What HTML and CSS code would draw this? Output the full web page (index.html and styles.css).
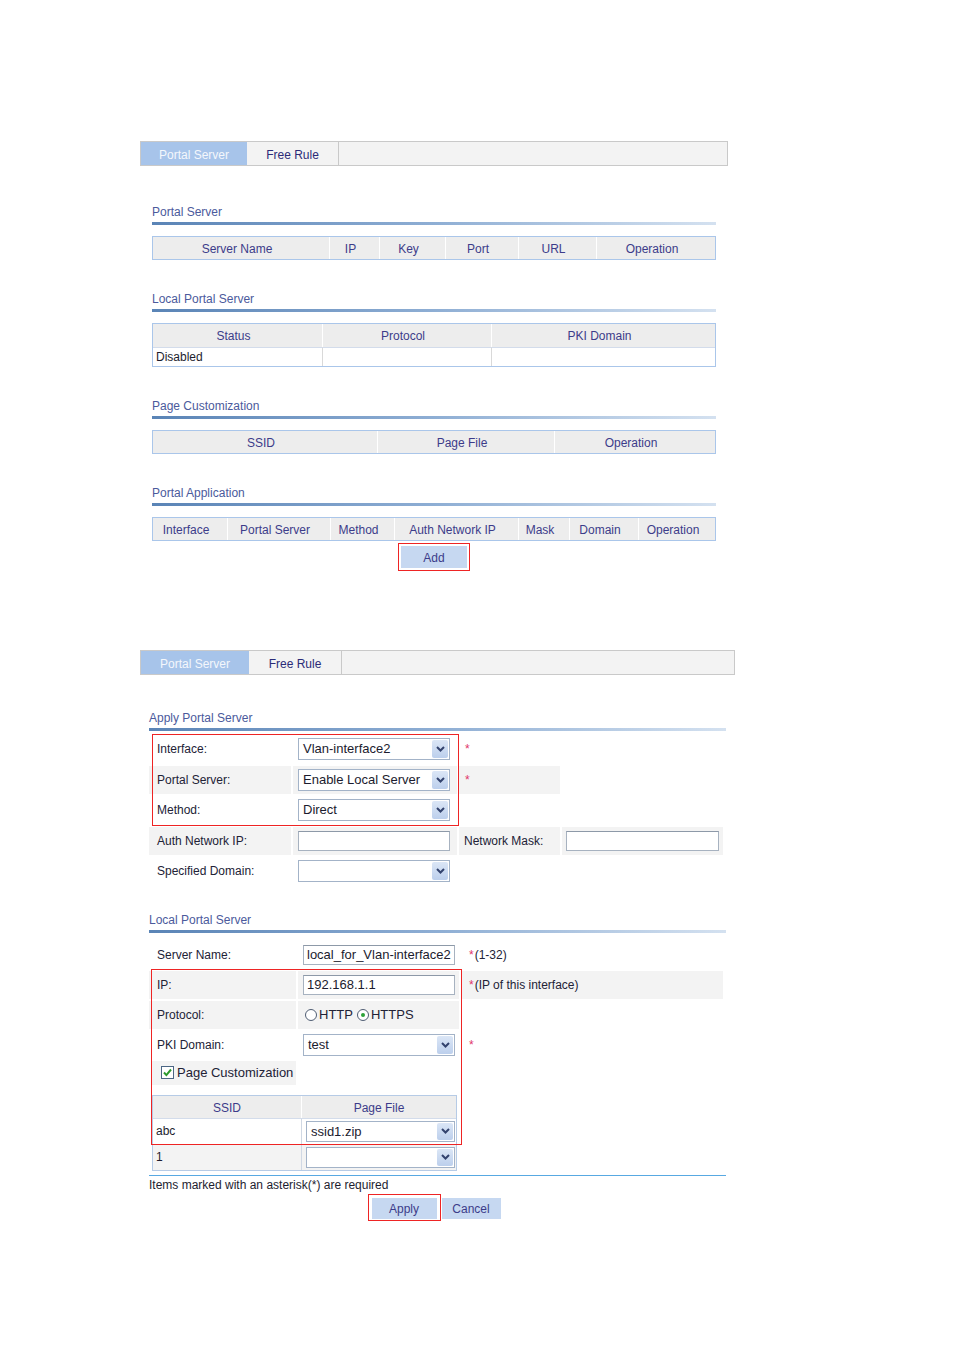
FILE: index.html
```html
<!DOCTYPE html>
<html lang="en">

<head>
    <meta charset="UTF-8">
    <meta name="viewport" content="width=device-width, initial-scale=1.0">
    <title>Portal Server</title>
    <link rel="stylesheet" href="styles.css">
</head>

<body>
    <!-- Portal server list -->
    <div class="panel panel-list">
        <div class="tabs">
            <div class="tab active">Portal Server</div>
            <div class="tab">Free Rule</div>
        </div>
        <div class="content">
            <div class="section first">
                <div class="sec-title">Portal Server</div>
                <div class="sec-bar"></div>
                <table class="list t-server">
                    <tr><th>Server Name</th><th>IP</th><th>Key</th><th>Port</th><th>URL</th><th>Operation</th></tr>
                </table>
            </div>
            <div class="section">
                <div class="sec-title">Local Portal Server</div>
                <div class="sec-bar"></div>
                <table class="list t-local">
                    <tr><th>Status</th><th>Protocol</th><th>PKI Domain</th></tr>
                    <tr><td>Disabled</td><td></td><td></td></tr>
                </table>
            </div>
            <div class="section">
                <div class="sec-title">Page Customization</div>
                <div class="sec-bar"></div>
                <table class="list t-page">
                    <tr><th>SSID</th><th>Page File</th><th>Operation</th></tr>
                </table>
            </div>
            <div class="section">
                <div class="sec-title">Portal Application</div>
                <div class="sec-bar"></div>
                <table class="list t-app">
                    <tr><th>Interface</th><th>Portal Server</th><th>Method</th><th>Auth Network IP</th><th>Mask</th><th>Domain</th><th>Operation</th></tr>
                </table>
                <div class="add-wrap">
                    <span class="mark"><button class="btn btn-add">Add</button></span>
                </div>
            </div>
        </div>
    </div>

    <!-- Apply portal server form -->
    <div class="panel panel-apply">
        <div class="tabs">
            <div class="tab active">Portal Server</div>
            <div class="tab">Free Rule</div>
        </div>
        <div class="content">
            <div class="section first">
                <div class="sec-title">Apply Portal Server</div>
                <div class="sec-bar"></div>
                <div class="form form-apply">
                    <div class="row">
                        <div class="cell c1">Interface:</div>
                        <div class="cell c2">
                            <div class="select"><span class="val">Vlan-interface2</span><span class="arrow"><svg width="9" height="6" viewBox="0 0 9 6"><path d="M1 1l3.5 3.5L8 1" fill="none" stroke="#33436e" stroke-width="2"/></svg></span></div>
                        </div>
                        <div class="cell c3"><span class="req">*</span></div>
                    </div>
                    <div class="row gray">
                        <div class="cell c1">Portal Server:</div>
                        <div class="cell c2">
                            <div class="select"><span class="val">Enable Local Server</span><span class="arrow"><svg width="9" height="6" viewBox="0 0 9 6"><path d="M1 1l3.5 3.5L8 1" fill="none" stroke="#33436e" stroke-width="2"/></svg></span></div>
                        </div>
                        <div class="cell c3"><span class="req">*</span></div>
                    </div>
                    <div class="row">
                        <div class="cell c1">Method:</div>
                        <div class="cell c2">
                            <div class="select"><span class="val">Direct</span><span class="arrow"><svg width="9" height="6" viewBox="0 0 9 6"><path d="M1 1l3.5 3.5L8 1" fill="none" stroke="#33436e" stroke-width="2"/></svg></span></div>
                        </div>
                    </div>
                    <div class="row gray">
                        <div class="cell c1">Auth Network IP:</div>
                        <div class="cell c2"><div class="input"></div></div>
                        <div class="cell c3 c3-label">Network Mask:</div>
                        <div class="cell c4"><div class="input"></div></div>
                    </div>
                    <div class="row">
                        <div class="cell c1">Specified Domain:</div>
                        <div class="cell c2">
                            <div class="select"><span class="val"></span><span class="arrow"><svg width="9" height="6" viewBox="0 0 9 6"><path d="M1 1l3.5 3.5L8 1" fill="none" stroke="#33436e" stroke-width="2"/></svg></span></div>
                        </div>
                    </div>
                    <div class="mark-box mark-apply"></div>
                </div>
            </div>

            <div class="section local">
                <div class="sec-title">Local Portal Server</div>
                <div class="sec-bar"></div>
                <div class="form form-local">
                    <div class="row">
                        <div class="cell l1">Server Name:</div>
                        <div class="cell l2"><div class="input filled">local_for_Vlan-interface2</div></div>
                        <div class="cell l3"><span class="req">*</span>(1-32)</div>
                    </div>
                    <div class="row gray">
                        <div class="cell l1">IP:</div>
                        <div class="cell l2"><div class="input filled">192.168.1.1</div></div>
                        <div class="cell l3"><span class="req">*</span>(IP of this interface)</div>
                    </div>
                    <div class="row gray">
                        <div class="cell l1">Protocol:</div>
                        <div class="cell l2 radios">
                            <span class="radio"></span>HTTP
                            <span class="radio on"></span>HTTPS
                        </div>
                    </div>
                    <div class="row">
                        <div class="cell l1">PKI Domain:</div>
                        <div class="cell l2">
                            <div class="select"><span class="val">test</span><span class="arrow"><svg width="9" height="6" viewBox="0 0 9 6"><path d="M1 1l3.5 3.5L8 1" fill="none" stroke="#33436e" stroke-width="2"/></svg></span></div>
                        </div>
                        <div class="cell l3"><span class="req">*</span></div>
                    </div>
                    <div class="row row-check gray">
                        <div class="cell l1 check-cell">
                            <span class="check"><svg width="11" height="11" viewBox="0 0 11 11"><path d="M2 5.5l2.4 2.6L9 2.5" fill="none" stroke="#2c9a2c" stroke-width="2"/></svg></span>Page Customization
                        </div>
                    </div>
                    <table class="list t-ssid">
                        <tr><th>SSID</th><th>Page File</th></tr>
                        <tr>
                            <td>abc</td>
                            <td>
                                <div class="select small"><span class="val">ssid1.zip</span><span class="arrow"><svg width="9" height="6" viewBox="0 0 9 6"><path d="M1 1l3.5 3.5L8 1" fill="none" stroke="#33436e" stroke-width="2"/></svg></span></div>
                            </td>
                        </tr>
                        <tr class="alt">
                            <td>1</td>
                            <td>
                                <div class="select small"><span class="val"></span><span class="arrow"><svg width="9" height="6" viewBox="0 0 9 6"><path d="M1 1l3.5 3.5L8 1" fill="none" stroke="#33436e" stroke-width="2"/></svg></span></div>
                            </td>
                        </tr>
                    </table>
                    <div class="mark-box mark-local"></div>
                </div>
                <div class="foot-line"></div>
                <div class="note">Items marked with an asterisk(*) are required</div>
                <div class="actions">
                    <span class="mark"><button class="btn btn-apply">Apply</button></span>
                    <button class="btn btn-cancel">Cancel</button>
                </div>
            </div>
        </div>
    </div>
</body>

</html>
```

FILE: styles.css
```css
body {
    margin: 0;
    font-family: "Liberation Sans", Arial, sans-serif;
    font-size: 12px;
    color: #222236;
    background: #fff;
}

/* panels and tabs */
.panel-list {
    margin: 141px 0 0 140px;
    width: 588px;
}

.panel-apply {
    margin: 79px 0 0 140px;
    width: 595px;
}

.tabs {
    display: flex;
    height: 25px;
    box-sizing: border-box;
    border: 1px solid #c9c9c9;
    background: #f3f3f3;
}

.tab {
    width: 91px;
    padding-top: 4px;
    line-height: 19px;
    text-align: center;
    color: #2b2b78;
    border-right: 1px solid #c9c9c9;
}

.tab.active {
    width: 106px;
    border-right: none;
    background: #a7c4ea;
    color: #f4f7fc;
}

.panel-apply .tab {
    width: 92px;
}

.panel-apply .tab.active {
    width: 108px;
}

.panel-list .content {
    margin-left: 12px;
    width: 564px;
}

.panel-apply .content {
    margin-left: 9px;
    width: 577px;
}

/* section headings */
.section {
    margin-top: 31px;
}

.section.first {
    margin-top: 38px;
}

.panel-apply .section.first {
    margin-top: 35px;
}

.section.local {
    margin-top: 26px;
}

.sec-title {
    padding-top: 1px;
    line-height: 15px;
    color: #4b5a9c;
}

.sec-bar {
    height: 3px;
    margin-top: 2px;
    background: linear-gradient(to right, #5a84b6, #8eaed4 50%, #d4e1f0);
}

/* list tables */
.list {
    width: 100%;
    margin-top: 11px;
    border-collapse: separate;
    border-spacing: 0;
    table-layout: fixed;
    border: 1px solid #aac6ea;
}

.list th {
    padding: 2px 0 0;
    line-height: 20px;
    text-indent: -8px;
    font-weight: normal;
    color: #3c3c8a;
    background: #ededed;
    border-left: 1px solid #fff;
}

.list th:first-child,
.list td:first-child {
    border-left: none;
}

.list td {
    padding: 0 0 0 3px;
    line-height: 18px;
    border-top: 1px solid #d3dceb;
    border-left: 1px solid #d9d9d9;
    color: #1d1d2e;
}

.t-server th:nth-child(1) { width: 176px; }
.t-server th:nth-child(2) { width: 49px; }
.t-server th:nth-child(3) { width: 65px; }
.t-server th:nth-child(4) { width: 72px; }
.t-server th:nth-child(5) { width: 77px; }

.t-local th:nth-child(1) { width: 169px; }
.t-local th:nth-child(2) { width: 168px; }
.t-local th { line-height: 21px; }

.t-page th:nth-child(1) { width: 224px; }
.t-page th:nth-child(2) { width: 176px; }

.t-app th:nth-child(1) { width: 74px; }
.t-app th:nth-child(2) { width: 102px; }
.t-app th:nth-child(3) { width: 63px; }
.t-app th:nth-child(4) { width: 123px; }
.t-app th:nth-child(5) { width: 50px; }
.t-app th:nth-child(6) { width: 68px; }

/* buttons */
.add-wrap {
    display: flex;
    justify-content: center;
    margin-top: 2px;
}

.mark {
    display: inline-flex;
    border: 1px solid #ee2424;
    padding: 2px;
}

.btn {
    font-family: "Liberation Sans", Arial, sans-serif;
    font-size: 12px;
    color: #3c3c8a;
    background: #c6d8f1;
    border: none;
    padding: 2px 0 0;
    height: 22px;
}

.btn-add {
    width: 66px;
}

.actions {
    display: flex;
    justify-content: center;
    align-items: flex-start;
    margin-top: 2px;
    padding-right: 7px;
}

.actions .mark {
    padding: 3px 3px 1px;
}

.btn-apply {
    width: 65px;
    height: 21px;
}

.btn-cancel {
    width: 59px;
    height: 21px;
    margin: 4px 0 0 1px;
}

/* form rows */
.form {
    position: relative;
}

.form-apply {
    margin-top: 4px;
}

.form-local {
    margin-top: 8px;
}

.row {
    display: flex;
    gap: 2px;
    height: 28.5px;
    margin-bottom: 2px;
}

.form-local .row {
    height: 28px;
}

.form-local .row-check {
    height: 24px;
    margin-bottom: 0;
}

.form-apply .row:nth-last-child(2) {
    margin-bottom: 0;
}

.cell {
    display: flex;
    align-items: center;
    box-sizing: border-box;
}

.row.gray .cell {
    background: #f3f3f3;
}

.c1 { width: 142px; padding-left: 8px; }
.c2 { width: 164px; padding-left: 5px; }
.c3 { width: 101px; padding-left: 6px; }
.c4 { width: 161px; padding-left: 4px; }
.c3-label { padding-left: 5px; }

.l1 { width: 147px; padding-left: 8px; }
.l2 { width: 161px; padding-left: 5px; }
.l3 { width: 262px; padding-left: 8px; }

.req {
    color: #e0356a;
    margin-right: 1px;
}

/* select box */
.select {
    display: flex;
    width: 152px;
    height: 22px;
    box-sizing: border-box;
    border: 1px solid #a3b3c8;
    background: #fff;
}

.select .val {
    flex: 1;
    padding-left: 4px;
    font-size: 13px;
    line-height: 20px;
    color: #1b1b2e;
    white-space: nowrap;
    overflow: hidden;
}

.select .arrow {
    display: flex;
    align-items: center;
    justify-content: center;
    width: 16px;
    margin: 1px;
    border-radius: 2px;
    background: linear-gradient(#dbe6f6, #bccfec);
}

.select.small {
    width: 149px;
    height: 21px;
}

/* text input */
.input {
    width: 152px;
    height: 20px;
    box-sizing: border-box;
    border: 1px solid #a7b2c0;
    border-top-color: #8d99a8;
    background: #fff;
}

.c4 .input {
    width: 153px;
}

.input.filled {
    padding-left: 3px;
    font-size: 13px;
    line-height: 18px;
    color: #1b1b2e;
    white-space: nowrap;
    overflow: hidden;
}

/* radios and checkbox */
.radios {
    padding-left: 7px;
    font-size: 13px;
}

.radio {
    display: inline-block;
    position: relative;
    width: 12px;
    height: 12px;
    box-sizing: border-box;
    border: 1px solid #4f5d73;
    border-radius: 50%;
    background: #fff;
    margin-right: 2px;
}

.radio.on {
    margin-left: 4px;
}

.radio.on::after {
    content: "";
    position: absolute;
    left: 3px;
    top: 3px;
    width: 4px;
    height: 4px;
    border-radius: 50%;
    background: #2ea23a;
}

.check-cell {
    padding-left: 9px;
    font-size: 13px;
    width: 144px;
    margin-left: 3px;
}

.check {
    display: inline-flex;
    align-items: center;
    justify-content: center;
    width: 13px;
    height: 13px;
    box-sizing: border-box;
    border: 1px solid #4b6684;
    background: #fff;
    margin-right: 3px;
}

/* ssid table */
.t-ssid {
    width: 305px;
    margin: 10px 0 0 3px;
    border-color: #b6cbe6;
}

.t-ssid th {
    text-indent: 0;
}

.t-ssid th:nth-child(1) { width: 148px; }

.t-ssid td {
    height: 25px;
    line-height: 25px;
    padding: 0 0 0 3px;
    border-left-color: #d0d8e4;
}

.t-ssid td:last-child {
    padding-left: 4px;
}

.t-ssid tr.alt td {
    background: #f3f3f3;
}

/* annotation boxes over the form */
.mark-box {
    position: absolute;
    z-index: 2;
    border: 1px solid #ee2424;
    box-sizing: border-box;
    pointer-events: none;
}

.mark-apply {
    left: 3px;
    top: -1px;
    width: 307px;
    height: 92px;
}

.mark-local {
    left: 2px;
    top: 28px;
    width: 311px;
    height: 176px;
}

/* footer */
.foot-line {
    height: 1px;
    margin-top: 4px;
    background: #58a9e2;
}

.note {
    margin-top: 2px;
    line-height: 14px;
    color: #1d1d30;
}
```
